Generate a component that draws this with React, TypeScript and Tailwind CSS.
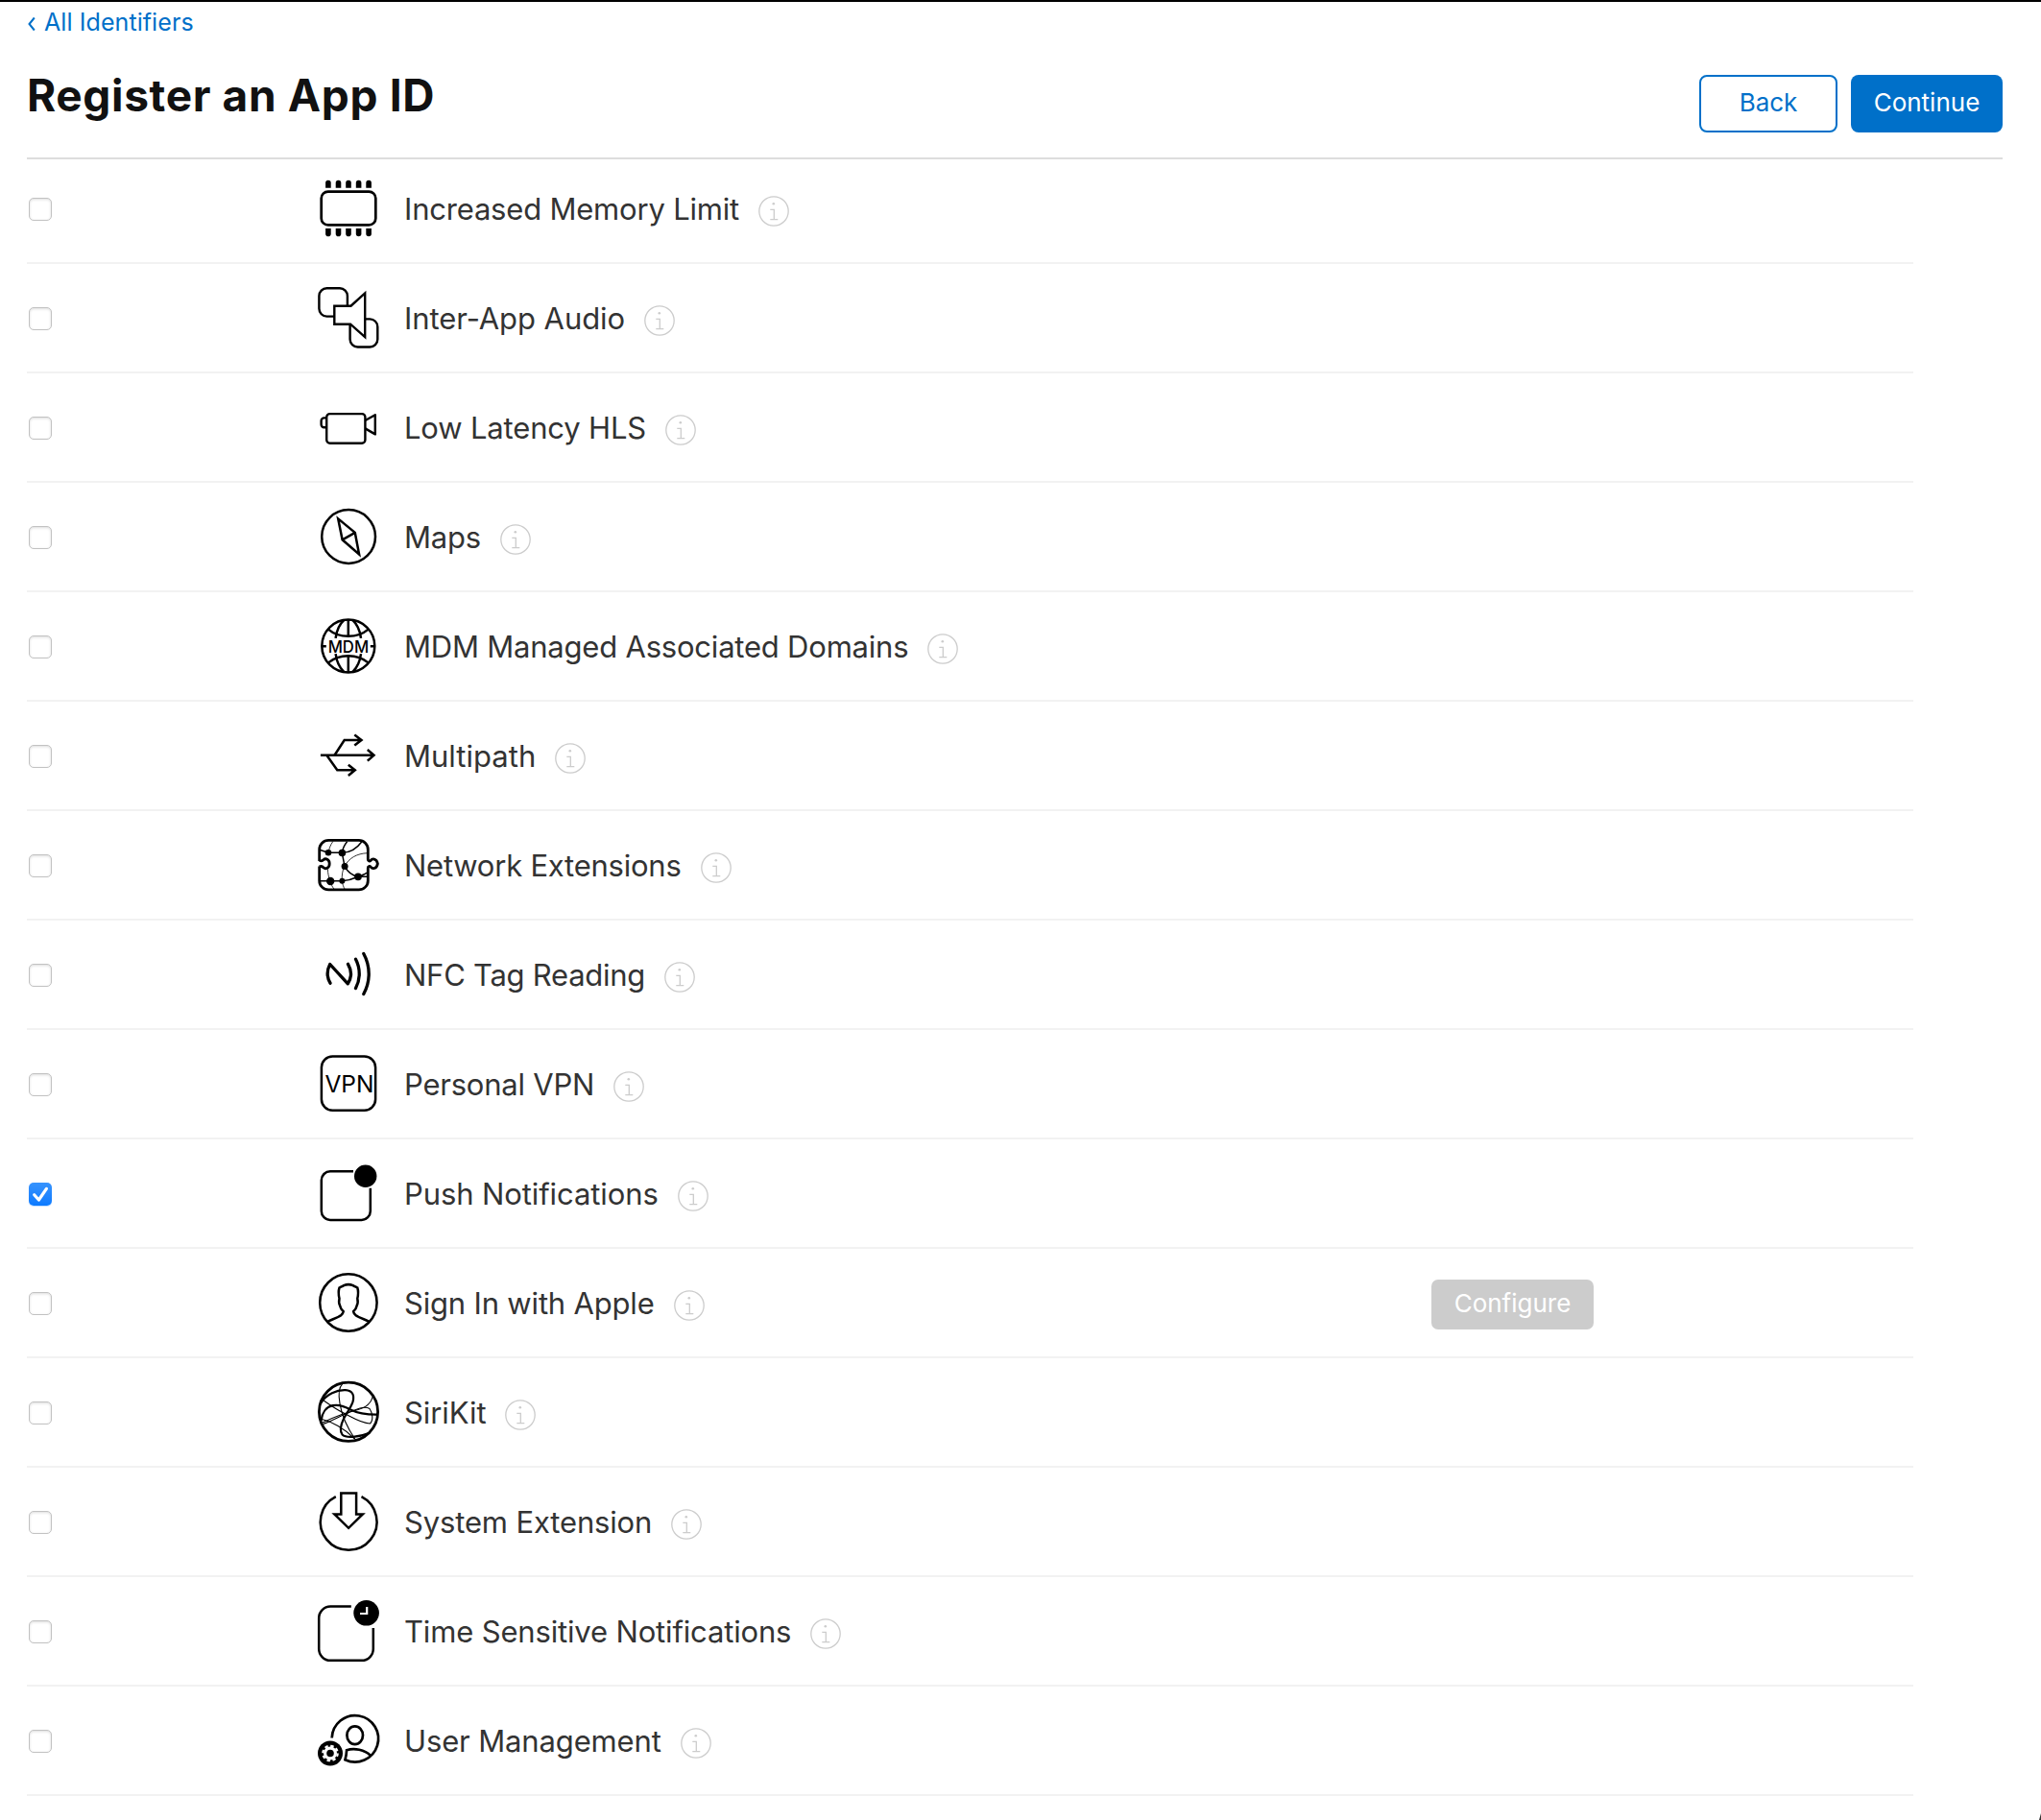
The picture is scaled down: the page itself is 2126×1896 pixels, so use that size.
import type { ReactNode } from 'react';

const FONT = "font-['Inter','Noto_Sans',sans-serif]";

function IconFrame({ children, width = 2.5, viewBox = '0 0 64 64' }: { children: ReactNode; width?: number; viewBox?: string }) {
  return (
    <svg
      viewBox={viewBox}
      width="64"
      height="64"
      fill="none"
      stroke="#000"
      strokeWidth={width}
      className="-mt-[2px] shrink-0 overflow-visible"
      aria-hidden="true"
    >
      {children}
    </svg>
  );
}

function MemoryIcon() {
  const pins = [8.1, 18.7, 29.2, 39.8, 50.3];
  return (
    <IconFrame width={2.7}>
      <rect x="3.7" y="14.6" width="56.6" height="34.8" rx="7" />
      {pins.map((x) => (
        <g key={x} fill="#000" stroke="none">
          <path d={`M${x} 10.8v-5.3a2.8 2.8 0 0 1 5.6 0v5.3z`} />
          <path d={`M${x} 53.1v5.3a2.8 2.8 0 0 0 5.6 0v-5.3z`} />
        </g>
      ))}
    </IconFrame>
  );
}

function AudioIcon() {
  return (
    <IconFrame width={2.4}>
      <path d="M17.3 30.6H9.4a8 8 0 0 1-8-8V9.3a8 8 0 0 1 8-8h13.5a8 8 0 0 1 8 8v10.4" />
      <path d="M49.200 33.400h5.100a8 8 0 0 1 8 8v13.100a8 8 0 0 1-8 8H41.600a8 8 0 0 1-8-8V38.700" />
      <path d="M17.300 19.700h17.200L49.200 6.400v45.800L34 38.700H17.300z" />
    </IconFrame>
  );
}

function CameraIcon() {
  return (
    <IconFrame width={2.4}>
      <rect x="9.200" y="18.100" width="40.200" height="30.600" rx="3.400" />
      <path d="M9.200 22.400H6.600a3 3 0 0 0-3 3v3.800a3 3 0 0 0 3 3h2.600" />
      <path d="M49.400 25l10.400-5.800v20.200l-10.400-6" strokeLinejoin="round" />
    </IconFrame>
  );
}

function CompassIcon() {
  return (
    <IconFrame>
      <circle cx="32.100" cy="32" r="27.900" />
      <path d="M21.200 13.400L38.800 27.900l4.300 22.600-17.500-15.200zM25.600 35.300l13.200-7.400" />
    </IconFrame>
  );
}

function MdmIcon() {
  return (
    <IconFrame width={2.5}>
      <circle cx="31.8" cy="32" r="27.5" />
      <path d="M31.8 4.5v18M31.8 41.5v18" />
      <path d="M27.2 5.2c-4.400 4-7.600 11-8.600 18.600M36.400 5.200c4.400 4 7.600 11 8.600 18.600" />
      <path d="M27.200 58.800c-4.400-4-7.600-11-8.600-18.600M36.400 58.800c4.400-4 7.600-11 8.600-18.600" />
      <path d="M11 14.600c5.600 4.800 12.800 7.200 20.800 7.200s15.200-2.400 20.800-7.200" />
      <path d="M11 49.400c5.600-4.800 12.800-7.200 20.800-7.200s15.200 2.400 20.800 7.200" />
      <path d="M4.500 32.200h4.300M54.800 32.200h4.300" />
      <text
        x="31.900"
        y="38.800"
        textAnchor="middle"
        textLength="42.500"
        lengthAdjust="spacingAndGlyphs"
        fill="#000"
        stroke="none"
        className="font-['Inter','Noto_Sans',sans-serif] text-[17.5px] font-medium"
      >
        MDM
      </text>
    </IconFrame>
  );
}

function MultipathIcon() {
  return (
    <IconFrame width={2.5}>
      <path d="M2.900 31.700h55.600M51.800 26l6.700 5.700-6.700 5.900" />
      <path d="M17.500 31.700L27.700 16h18M38.300 10.600l7.200 5.400-7.200 5.600" />
      <path d="M9.300 31.700l11 15.600h18.500M31.800 41.700l7 5.600-7 5.700" />
    </IconFrame>
  );
}

function NetworkIcon() {
  return (
    <IconFrame width={2.8}>
      <path d="M1.700 28V15.900a9.500 9.500 0 0 1 9.500-9.500h31.600a9.500 9.500 0 0 1 9.500 9.500v10.300c0 2 1.800 2.300 3 1 1.200-1.600 5.800-2.700 7.100 3.500-1 6.200-5.900 5.400-7.100 3.600-1.200-1.500-3-1-3 1v13.100a9.500 9.500 0 0 1-9.500 9.500H11.200a9.500 9.500 0 0 1-9.500-9.500V33.600" />
      <path d="M1.700 27.500c1.600.6 3.300.4 4.200-.8 2.200-2 6.300-.6 6.300 4.100s-4.100 6-6.300 4c-.9-1.200-2.600-1.600-4.200-.9" />
      <g strokeWidth="1.500">
        <path d="M11 19.300h14.300c8 0 15.700-4.800 20.600-11.600M2.500 16.500l8.500 2.800M25.300 19.700c.6-4.700 2.400-8.500 5.300-12M25.300 19.700L28 33.300c3 6 8 9.600 14 11" />
        <path d="M2.500 48.800H25.300c6.200-.4 11.700-2.100 16.700-4.500 4.100-1.200 7.500-2.500 10.300-4.600M42 44.300h10.300" />
      </g>
      <g strokeWidth="0.800">
        <path d="M11 19.300c.8-4.400 2.300-8.200 4.800-11.700M28 33.300c4.500-8.300 12.500-13.200 24-13.600M28 33.300c-2.600 5-3 10-2.700 15.400.4 3.400 1.400 6 3 9M13 49c-1.500-4-2.600-8.500-2.600-12.500M13 49c.8 3.400 2.300 6.200 4.500 8.700" />
      </g>
      <g fill="#000" stroke="none">
        <circle cx="11" cy="19.200" r="3.300" />
        <circle cx="25.400" cy="19.500" r="3.800" />
        <circle cx="28.100" cy="33.500" r="3.500" />
        <circle cx="42" cy="44.400" r="3.800" />
        <circle cx="13.200" cy="49" r="4.200" />
        <circle cx="25.400" cy="48.700" r="3" />
      </g>
    </IconFrame>
  );
}

function NfcIcon() {
  return (
    <IconFrame width={3.3}>
      <g strokeLinecap="round" strokeLinejoin="round">
        <path d="M13 41.200c-3.500-6-3.500-13.500-.3-19.700l18.600 20.300c4-6.300 4-14 .2-20.500" />
        <path d="M39.500 16.200c5 9.500 5 21 0 30.400" />
        <path d="M47.800 10.500c7.200 13.300 7.200 28.700 0 42" />
      </g>
    </IconFrame>
  );
}

function VpnIcon() {
  return (
    <IconFrame width={2.5}>
      <rect x="3.900" y="3.600" width="56.200" height="56.200" rx="11.500" />
      <text
        x="32.900"
        y="40.700"
        textAnchor="middle"
        textLength="51"
        lengthAdjust="spacingAndGlyphs"
        fill="#000"
        stroke="none"
        className="font-['Inter','Noto_Sans',sans-serif] text-[24.5px]"
      >
        VPN
      </text>
    </IconFrame>
  );
}

function PushIcon() {
  return (
    <IconFrame width={2.5}>
      <path d="M37 9.300H13a9.200 9.200 0 0 0-9.200 9.200v32.200a9.200 9.200 0 0 0 9.200 9.200h32.600a9.200 9.200 0 0 0 9.200-9.200V26.700" />
      <circle cx="49.700" cy="14.300" r="11.700" fill="#000" stroke="none" />
    </IconFrame>
  );
}

function SignInIcon() {
  return (
    <IconFrame width={2.5}>
      <circle cx="31.900" cy="32" r="29.700" />
      <path d="M10.500 51.600c5.500-2.500 11-4.300 14-6.700 1.300-1.200 2-2.600 2.200-3.700-1.700-1.500-3-3.200-3.400-5.500-1.300-2.200-1.500-4.900-.8-7.900-.9-4-1-8.400 0-11.300 2-1 3.300-1.500 4.600-2.400 2.700-1.100 6.900-1.100 9.600 0 1.300.9 2.600 1.400 4.600 2.400 1 2.900.9 7.300 0 11.300.7 3 .5 5.700-.8 7.900-.4 2.300-1.700 4-3.400 5.500.2 1.100.9 2.500 2.200 3.700 3 2.400 8.500 4.200 14 6.700" />
    </IconFrame>
  );
}

function SiriIcon() {
  return (
    <IconFrame width={2.8}>
      <circle cx="32" cy="31.800" r="30.600" />
      <g strokeWidth="2.200">
        <path d="M3 23C9 13 20 8.800 29 9.200c7 .4 9.500 5 7.500 12.200-2 6-6.500 12-9.500 17.500C24 45 22.500 51 25.500 55.500c4 4 17 2.700 28.500-1.800" />
        <path d="M3.500 41c1-8.500 5.500-14.500 12-15.800 6-1.200 12.500.8 18.500 4.300 8 4 17.500 5.300 28 5.200" />
      </g>
      <g strokeWidth="1.100">
        <path d="M25.700 2.700c-4.500 4.500-4.200 12-2.700 20.500C25 36 32.500 51 39 60.500" />
        <path d="M5.500 19.500C12 24 18 28.500 27 33c9 4.500 18 10.500 27.500 11 3.500-3 2.800-11-.5-15.500-6-3.500-15 1-24 5C21 37.500 12 42.500 5.500 44.500" />
        <path d="M57.500 14.500c-1.500 9-9 13.500-17 15.500-10 2-23 7-35.500 13" />
        <path d="M4.500 39.500C14 42 28 49 38.500 60" />
        <path d="M1.800 27c2-9 7.500-18 17.500-23.500" />
      </g>
    </IconFrame>
  );
}

function SystemIcon() {
  return (
    <IconFrame width={2.5}>
      <path d="M18.800 6.200a29.400 29.400 0 1 0 26.700 0" />
      <path d="M24.300 2.500h15.800v21.900h6.700L32.100 38.800 17.400 24.400h6.900z" />
    </IconFrame>
  );
}

function TimeSensitiveIcon() {
  return (
    <IconFrame width={2.5}>
      <path d="M34.800 6.500H13.200a12 12 0 0 0-12 12v32.300a12 12 0 0 0 12 12h32.600a12 12 0 0 0 12-12V29" />
      <circle cx="50.600" cy="13.300" r="13.300" fill="#000" stroke="none" />
      <path d="M51.200 7v7H44" stroke="#fff" strokeWidth="2.200" />
    </IconFrame>
  );
}

function UserManagementIcon() {
  return (
    <IconFrame width={2.7}>
      <path d="M14.700 29.500a24.200 24.200 0 1 1 13.800 22.700c.9-3.200 1.400-6.200 1.600-10 8-2.400 18.600-.6 25 5.800" />
      <ellipse cx="38.700" cy="26.700" rx="8.300" ry="9.400" />
      <circle cx="13" cy="45.500" r="13" fill="#000" stroke="none" />
      <circle cx="13" cy="45.500" r="5.400" stroke="#fff" strokeWidth="3.200" />
      <circle cx="13" cy="45.500" r="7.700" stroke="#fff" strokeWidth="2.200" strokeDasharray="3.450 2.600" />
    </IconFrame>
  );
}

function InfoIcon() {
  return (
    <svg viewBox="0 0 32 32" width="32" height="32" fill="none" stroke="#ccc" strokeWidth="1.300" className="mt-[3px] ml-5 shrink-0">
      <circle cx="16" cy="16" r="15.200" />
      <circle cx="15.800" cy="8.300" r="1.300" fill="#ccc" stroke="none" />
      <path d="M12.300 14.300h4v10.400M12.300 24.700h8" />
    </svg>
  );
}

function Checkbox({ checked }: { checked?: boolean }) {
  if (checked) {
    return (
      <span role="checkbox" aria-checked="true" className="flex size-6 rounded-[5px] bg-linear-to-b from-[#3693fd] to-[#0a7aff] shadow-[0_1px_1px_rgba(10,122,255,0.25)]">
        <svg viewBox="0 0 24 24" width="24" height="24" fill="none" stroke="#fff" strokeWidth="3.200" strokeLinecap="round" strokeLinejoin="round">
          <path d="M5.700 12.800l4.700 5.200 8-11.600" />
        </svg>
      </span>
    );
  }
  return (
    <span
      role="checkbox"
      aria-checked="false"
      className="size-6 rounded-[5px] border border-[#c2c2c2] bg-white shadow-[inset_0_1px_3px_rgba(0,0,0,0.14)]"
    />
  );
}

type Capability = {
  name: string;
  tracking: string;
  icon: ReactNode;
  checked?: boolean;
  configurable?: boolean;
};

const capabilities: Capability[] = [
  { name: 'Increased Memory Limit', tracking: 'tracking-[-0.2px]', icon: <MemoryIcon /> },
  { name: 'Inter-App Audio', tracking: 'tracking-[-0.07px]', icon: <AudioIcon /> },
  { name: 'Low Latency HLS', tracking: 'tracking-[-0.17px]', icon: <CameraIcon /> },
  { name: 'Maps', tracking: 'tracking-[-0.2px]', icon: <CompassIcon /> },
  { name: 'MDM Managed Associated Domains', tracking: 'tracking-[-0.21px]', icon: <MdmIcon /> },
  { name: 'Multipath', tracking: 'tracking-[0.02px]', icon: <MultipathIcon /> },
  { name: 'Network Extensions', tracking: 'tracking-[-0.24px]', icon: <NetworkIcon /> },
  { name: 'NFC Tag Reading', tracking: 'tracking-[-0.26px]', icon: <NfcIcon /> },
  { name: 'Personal VPN', tracking: 'tracking-[-0.22px]', icon: <VpnIcon /> },
  { name: 'Push Notifications', tracking: 'tracking-[-0.1px]', icon: <PushIcon />, checked: true },
  { name: 'Sign In with Apple', tracking: 'tracking-[-0.18px]', icon: <SignInIcon />, configurable: true },
  { name: 'SiriKit', tracking: 'tracking-[-0.08px]', icon: <SiriIcon /> },
  { name: 'System Extension', tracking: 'tracking-[-0.15px]', icon: <SystemIcon /> },
  { name: 'Time Sensitive Notifications', tracking: 'tracking-[-0.16px]', icon: <TimeSensitiveIcon /> },
  { name: 'User Management', tracking: 'tracking-[-0.14px]', icon: <UserManagementIcon /> },
];

function CapabilityRow({ name, tracking, icon, checked, configurable }: Capability) {
  return (
    <li className="flex h-[114px] items-center border-b-2 border-[#f2f2f2] pt-[2px]">
      <div className="flex w-[303px] shrink-0 pl-[2px]">
        <Checkbox checked={checked} />
      </div>
      {icon}
      <span className={`ml-[26px] text-[31px] leading-10 whitespace-nowrap text-[#333] ${tracking}`}>{name}</span>
      <InfoIcon />
      {configurable && (
        <div className="mt-[2px] ml-auto w-[502px]">
          <button disabled className="flex h-[52px] w-[169px] items-center justify-center rounded-[7px] bg-[#ccc] pb-[3px] text-[26px] text-white">
            Configure
          </button>
        </div>
      )}
    </li>
  );
}

export default function App() {
  return (
    <div className={`relative h-[1896px] overflow-hidden border-t-2 border-black bg-white pl-7 ${FONT}`}>
      <a className="flex items-center pt-[5px] text-[25px] leading-8 tracking-[0.08px] text-[#0070c9]">
        <svg viewBox="0 0 10 18" width="10" height="18" fill="none" stroke="currentColor" strokeWidth="2" className="mt-[3px] mr-2">
          <path d="M7.800 2.500L2.500 9l5.300 6.500" />
        </svg>
        All Identifiers
      </a>
      <header className="flex h-[127px] w-[2058px] items-start justify-between border-b-2 border-[#ddd]">
        <h1 className="mt-8 text-[46px] leading-[56px] font-bold tracking-[0.65px] text-[#111]">Register an App ID</h1>
        <div className="mt-[39px] flex gap-[14px] text-[26px]">
          <button className="flex h-[60px] w-36 items-center justify-center rounded-lg border-2 border-[#0070c9] pb-[3px] text-[#0070c9]">
            Back
          </button>
          <button className="flex h-[60px] w-[158px] items-center justify-center rounded-lg bg-[#0070c9] pb-[3px] text-white">
            Continue
          </button>
        </div>
      </header>
      <ul className="-mt-[5px] w-[1965px]">
        {capabilities.map((c) => (
          <CapabilityRow key={c.name} {...c} />
        ))}
      </ul>
      {/* Rounded window corner */}
      <svg viewBox="0 0 2 7" width="2" height="7" className="absolute right-0 bottom-0" aria-hidden="true">
        <path d="M2 0v7H0z" fill="#333" />
      </svg>
    </div>
  );
}
